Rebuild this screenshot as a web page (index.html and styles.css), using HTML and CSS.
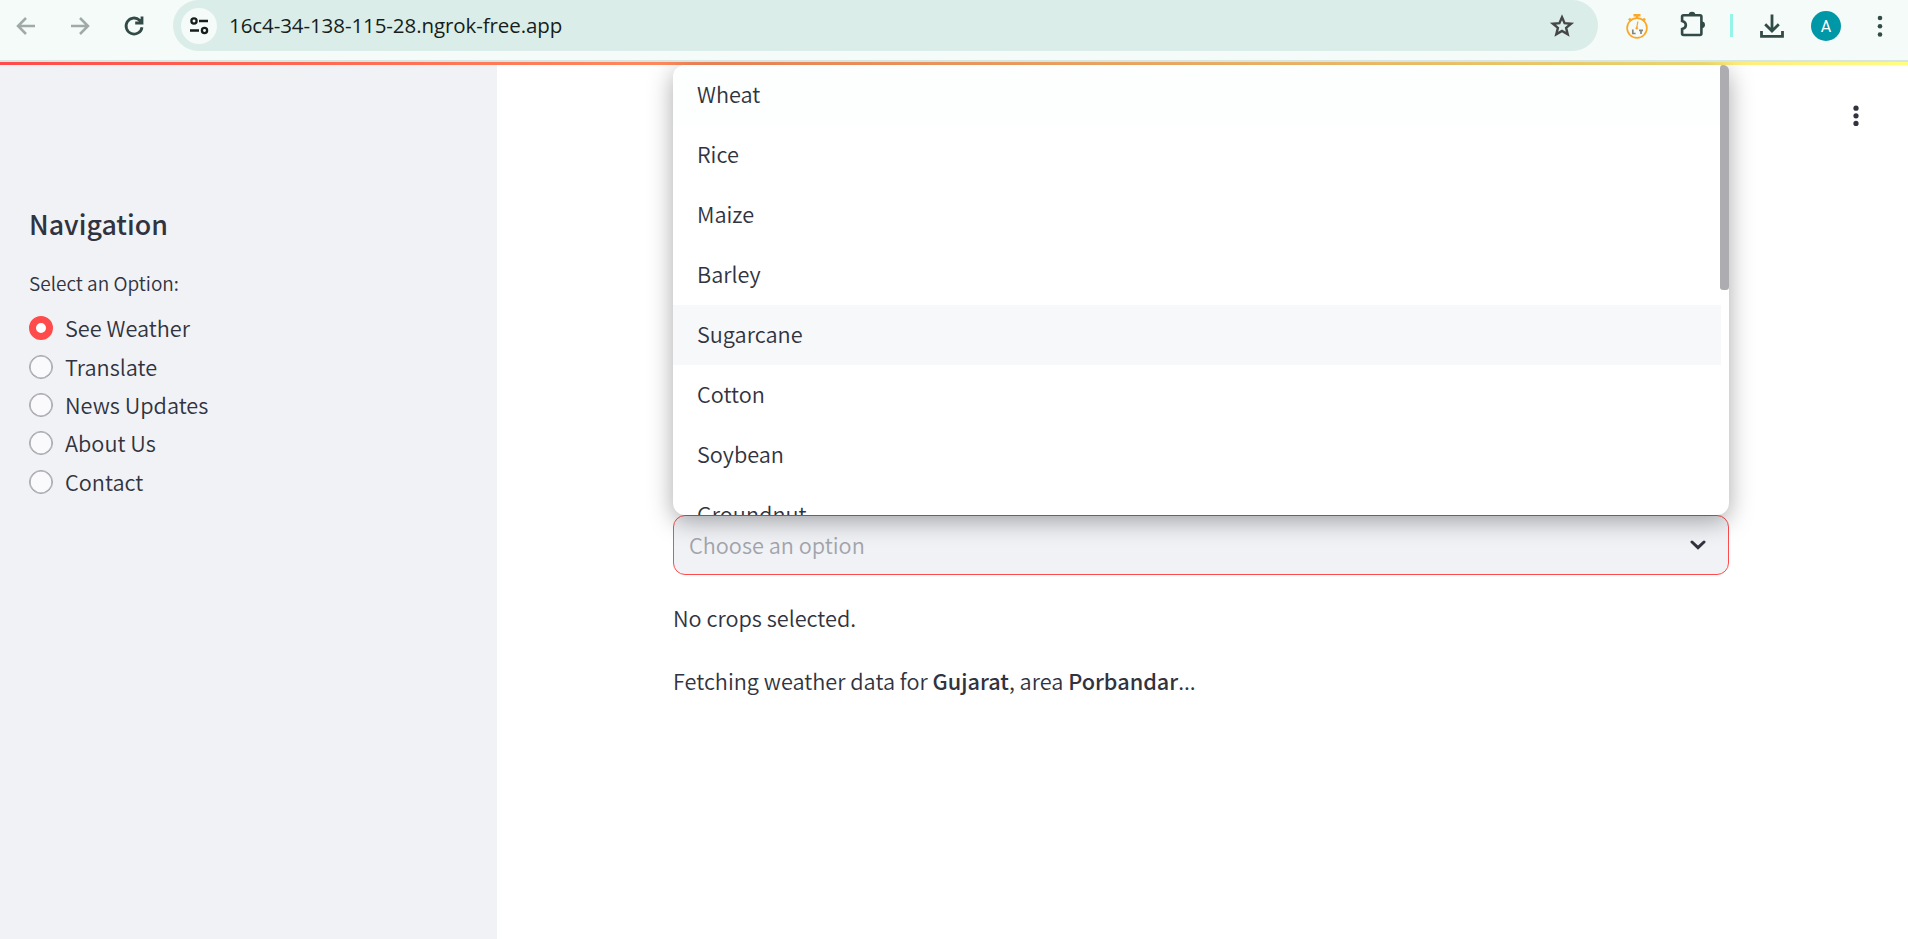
FILE: index.html
```html
<!DOCTYPE html>
<html lang="en">
<head>
<meta charset="utf-8">
<title>Weather</title>
<link rel="stylesheet" href="styles.css">
</head>
<body>
<header class="toolbar">
  <div class="nav-icons">
    <svg class="muted" width="24" height="24" viewBox="0 0 24 24"><path d="M21 12H4M12 4L4 12l8 8"/></svg>
    <svg class="muted" width="24" height="24" viewBox="0 0 24 24"><path d="M3 12h17M12 4l8 8-8 8"/></svg>
    <svg class="reload" width="24" height="24" viewBox="0 0 24 24"><path d="M20 13.2A8 8 0 1 1 17.6 6.2L20 8.6M20 2.5V9h-6.8"/></svg>
  </div>
  <div class="address">
    <span class="site-info">
      <svg width="20" height="20" viewBox="0 0 20 20"><circle cx="5" cy="5" r="2.6"/><path d="M10 5h9M1 14.5h9"/><circle cx="15.5" cy="14.5" r="2.6"/></svg>
    </span>
    <span class="url">16c4-34-138-115-28.ngrok-free.app</span>
    <svg class="star" width="26" height="26" viewBox="0 0 26 26"><path d="M13 4.2l2.6 6 6.5.5-5 4.2 1.6 6.4L13 17.9l-5.7 3.4 1.6-6.4-5-4.2 6.5-.5z"/></svg>
  </div>
  <div class="actions">
    <svg class="timer" width="24" height="26" viewBox="0 0 24 26"><circle cx="12" cy="15" r="9.9"/><path d="M8.5 2.3h7M12 2v4M4 5.6L6.3 8M20 5.6L17.7 8" stroke-width="2.6"/><path d="M12.8 8.5L11.6 16" stroke-width="1.3"/><circle cx="11.8" cy="15.2" r="1" stroke-width="1"/><path class="letters" d="M7.8 16.5v4h2.8M14 17.3h4M16 17.3v3.8"/></svg>
    <svg class="puzzle" width="28" height="28" viewBox="0 0 28 28"><path d="M4.5 5.2H21a1.4 1.4 0 0 1 1.4 1.4v17a1.4 1.4 0 0 1-1.4 1.4H4.5a1.4 1.4 0 0 1-1.4-1.4v-4.5c5-1.2 5-6.8 0-8V6.6a1.4 1.4 0 0 1 1.4-1.4z"/><path class="solid" d="M9.7 5a3.3 3.3 0 0 1 6.6 0zM22.6 11.4a3.4 3.4 0 0 1 0 6.8z"/></svg>
    <span class="divider"></span>
    <svg class="download" width="26" height="26" viewBox="0 0 26 26"><path d="M13 1.5v16M6.2 11.2l6.8 6.8 6.8-6.8M2.5 18v5.3h21V18"/></svg>
    <span class="avatar">A</span>
    <svg class="dots" width="6" height="22" viewBox="0 0 6 22"><circle cx="3" cy="3" r="2.3"/><circle cx="3" cy="11.2" r="2.3"/><circle cx="3" cy="19.5" r="2.3"/></svg>
  </div>
</header>
<div class="page">
  <div class="decoration"></div>
  <aside class="sidebar">
    <h2>Navigation</h2>
    <p class="group-label">Select an Option:</p>
    <div class="radios">
      <label class="radio checked"><i></i><span>See Weather</span></label>
      <label class="radio"><i></i><span>Translate</span></label>
      <label class="radio"><i></i><span>News Updates</span></label>
      <label class="radio"><i></i><span>About Us</span></label>
      <label class="radio"><i></i><span>Contact</span></label>
    </div>
  </aside>
  <main class="content">
    <svg class="menu" width="6" height="22" viewBox="0 0 6 22"><circle cx="3" cy="3.2" r="2.6"/><circle cx="3" cy="10.8" r="2.6"/><circle cx="3" cy="18.4" r="2.6"/></svg>
    <div class="column">
      <div class="select">
        <span>Choose an option</span>
        <svg width="16" height="10" viewBox="0 0 16 10"><path d="M2 2l6 5.6L14 2"/></svg>
        <ul class="options">
          <li>Wheat</li><li>Rice</li><li>Maize</li><li>Barley</li><li class="active">Sugarcane</li><li>Cotton</li><li>Soybean</li><li>Groundnut</li>
        </ul>
        <div class="thumb"></div>
      </div>
      <p class="empty">No crops selected.</p>
      <p class="status">Fetching weather data for <b>Gujarat</b>, area <b>Porbandar</b>...</p>
    </div>
  </main>
</div>
</body>
</html>
```

FILE: styles.css
```css
* { box-sizing: border-box; }
body {
  margin: 0;
  height: 939px;
  overflow: hidden;
  display: flex;
  flex-direction: column;
  background: #fff;
  color: #31333f;
  font: 350 21.7px/36px "Noto Sans CJK SC", "Open Sans", sans-serif;
}
h2, p, ul { margin: 0; padding: 0; }
svg { display: block; fill: none; flex: none; }

.toolbar {
  flex: none;
  height: 62px;
  display: flex;
  align-items: flex-start;
  background: #f4fbf8;
  border-bottom: 2px solid #d8e6e2;
}
.nav-icons {
  width: 173px;
  height: 51px;
  padding-left: 14px;
  display: flex;
  align-items: center;
  gap: 30px;
}
.muted { stroke: #a1aaa6; stroke-width: 2.5; }
.reload { stroke: #334b47; stroke-width: 2.8; }
.address {
  width: 1425px;
  height: 51px;
  padding: 0 23px 0 8px;
  display: flex;
  align-items: center;
  background: #daede8;
  border-radius: 26px;
}
.site-info {
  width: 36px;
  height: 36px;
  display: grid;
  place-items: center;
  border-radius: 50%;
  background: #f4fbf8;
  stroke: #161d1b;
  stroke-width: 2.3;
}
.url {
  flex: 1;
  margin-left: 12px;
  color: #161d1b;
  font: 400 20.5px/51px "Open Sans", sans-serif;
  letter-spacing: -.08px;
}
.star { stroke: #454746; stroke-width: 2.4; }
.actions {
  height: 51px;
  flex: 1;
  display: flex;
  align-items: center;
  padding-left: 27px;
}
.timer { stroke: #fca826; stroke-width: 1.7; }
.timer .letters { stroke: #858585; stroke-width: 1.7; }
.puzzle { margin: -3px 0 0 30px; stroke: #334b47; stroke-width: 2.6; }
.puzzle .solid { fill: #334b47; stroke: none; }
.divider { width: 3px; height: 23px; margin-left: 23px; background: #94f4e8; }
.download { margin-left: 26px; stroke: #334b47; stroke-width: 2.8; }
.avatar {
  width: 30px;
  height: 30px;
  margin-left: 26px;
  border-radius: 50%;
  background: #0097a7;
  color: #fff;
  font: 400 16px/31px Roboto, sans-serif;
  text-align: center;
}
.dots { margin-left: 36px; fill: #334b47; }

.page {
  flex: 1;
  display: grid;
  grid-template: 3px 1fr / 497px 1fr;
  overflow: hidden;
}
.decoration { grid-column: 1 / 3; background: linear-gradient(90deg, #ff4b4b, #fffd80); }

.sidebar { padding: 141px 29px 0; background: #f0f2f6; }
h2 { font-size: 26.8px; line-height: 36px; font-weight: 500; }
.group-label { margin-top: 23px; font-size: 19px; line-height: 36px; }
.radios { margin-top: 8px; }
.radio { height: 38.4px; display: flex; align-items: center; gap: 12px; }
.radio i {
  width: 24px;
  height: 24px;
  border-radius: 50%;
  background: #fafafc;
  border: 1px solid #a3a5ac;
  box-shadow: inset 0 0 0 .6px #a3a5ac;
}
.radio.checked i { background: #fff; border: 7.5px solid #ff4b4b; box-shadow: none; }

.content { display: flex; flex-direction: column; }
.menu { margin: 40px 49px 0 auto; fill: #31333f; }
.column { width: 1056px; margin: 388px 0 0 176px; }
.select {
  position: relative;
  height: 60px;
  padding: 0 22px 0 15px;
  display: flex;
  align-items: center;
  justify-content: space-between;
  border: 1px solid #ff4b4b;
  border-radius: 12px;
  background: #f0f2f6;
  color: #a3a4ab;
}
.select svg { stroke: #31333f; stroke-width: 3; stroke-linecap: round; }
.options {
  position: absolute;
  left: -1px;
  bottom: 59px;
  width: 1056px;
  height: 450px;
  overflow: hidden;
  border-radius: 12px;
  background: #fff;
  box-shadow: 0 6px 24px rgba(0, 0, 0, .34);
  color: #31333f;
  list-style: none;
}
.options li { height: 60px; margin-right: 8px; padding-left: 24px; line-height: 57px; }
.options .active { background: #f7f8fa; }
.options li:first-child { background: #fcfffe; }
.thumb {
  position: absolute;
  right: -1px;
  bottom: 284px;
  width: 9px;
  height: 225px;
  border-radius: 5px 9px 5px 5px;
  background: #adadb1;
}
.empty { margin-top: 25px; }
.status { margin-top: 27px; }
.status b { font-weight: 500; }
```
